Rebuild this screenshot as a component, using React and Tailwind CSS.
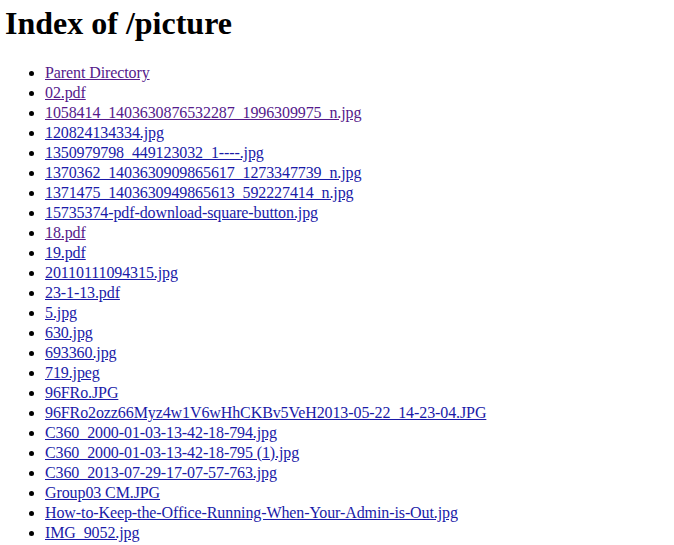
const files = [
  { name: "Parent Directory", visited: true },
  { name: "02.pdf", visited: true },
  { name: "1058414_1403630876532287_1996309975_n.jpg", visited: true },
  { name: "120824134334.jpg" },
  { name: "1350979798_449123032_1----.jpg" },
  { name: "1370362_1403630909865617_1273347739_n.jpg" },
  { name: "1371475_1403630949865613_592227414_n.jpg" },
  { name: "15735374-pdf-download-square-button.jpg" },
  { name: "18.pdf", visited: true },
  { name: "19.pdf" },
  { name: "20110111094315.jpg" },
  { name: "23-1-13.pdf" },
  { name: "5.jpg" },
  { name: "630.jpg" },
  { name: "693360.jpg" },
  { name: "719.jpeg" },
  { name: "96FRo.JPG" },
  { name: "96FRo2ozz66Myz4w1V6wHhCKBv5VeH2013-05-22_14-23-04.JPG" },
  { name: "C360_2000-01-03-13-42-18-794.jpg" },
  { name: "C360_2000-01-03-13-42-18-795 (1).jpg" },
  { name: "C360_2013-07-29-17-07-57-763.jpg" },
  { name: "Group03 CM.JPG" },
  { name: "How-to-Keep-the-Office-Running-When-Your-Admin-is-Out.jpg" },
  { name: "IMG_9052.jpg" },
];

export default function App() {
  return (
    <div className="min-h-screen bg-white pl-[5px] pt-[5px] text-black font-['Liberation_Serif',serif]">
      <h1 className="text-[32px] font-bold leading-[37px]">Index of /picture</h1>
      <ul className="mt-[21px] list-disc pl-[40px] text-[16px] leading-[20px] tracking-[-0.1px]">
        {files.map((f) => (
          <li key={f.name}>
            <a
              href="#"
              className={
                f.visited
                  ? "text-[#551a8b] underline"
                  : "text-[#1a1aa8] underline"
              }
            >
              {f.name}
            </a>
          </li>
        ))}
      </ul>
    </div>
  );
}
